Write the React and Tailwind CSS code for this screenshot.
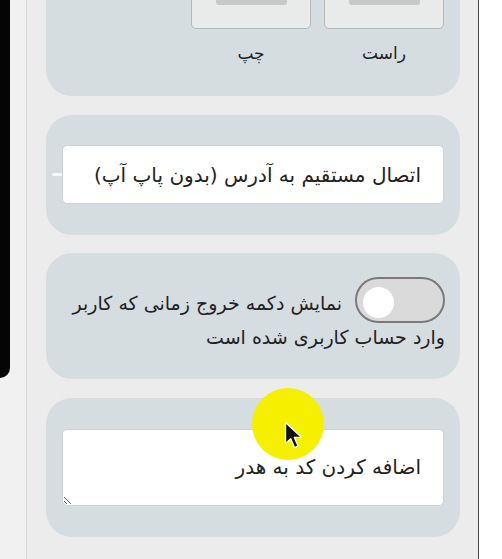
export default function App() {
  return (
    <div className="relative flex w-[502px] h-[559px] overflow-hidden bg-white font-['DejaVu_Sans',sans-serif] text-[#222]">
      {/* left strip */}
      <div className="w-[26px] h-full bg-[#f1f1f1] shrink-0">
        <div className="w-[10px] h-[378px] bg-[#050505] rounded-br-[10px]" />
      </div>
      <div className="w-px h-full bg-[#d6d6d6] shrink-0" />

      {/* main panel */}
      <div dir="rtl" className="w-[451px] h-full shrink-0 bg-[#ececec] pr-[18px] pl-[19px] flex flex-col">
        {/* card 1 */}
        <div className="mt-[-59px] bg-[#d6dde1] rounded-[26px] pt-[16px] pb-[33px] px-[16px] flex gap-[13px]">
          {["راست", "چپ"].map((label) => (
            <div key={label} className="w-[120px] flex flex-col items-center">
              <div className="w-full h-[72px] bg-[#e9eaea] border border-[#b8b8b8] rounded-[5px] flex justify-center">
                <div className="mt-[27px] w-[71px] h-[20px] bg-[#c8c8c8] rounded-[3px]" />
              </div>
              <div className="mt-[14px] text-[17px] leading-[20px]">{label}</div>
            </div>
          ))}
        </div>

        {/* card 2 */}
        <div className="mt-[19px] bg-[#d6dde1] rounded-[26px] pt-[30px] pb-[31px] px-[16px]">
          <div className="relative">
            <input
              dir="rtl"
              defaultValue="اتصال مستقیم به آدرس (بدون پاپ آپ)"
              className="block w-full h-[59px] bg-white border border-[#cfd2d4] rounded-[5px] pr-[22px] pl-[10px] text-[20px] text-[#222] outline-none font-['DejaVu_Sans',sans-serif]"
            />
            <span className="absolute left-[-10px] top-[28px] w-[10px] h-[3px] bg-white/80 rounded-full" />
          </div>
        </div>

        {/* card 3 */}
        <div className="mt-[18px] bg-[#d6dde1] rounded-[26px] pt-[33px] pb-[25px] pr-[15px] pl-[16px]">
          <p className="text-[19px] leading-[34px]">
            <span className="inline-block align-top mt-[-9px] mb-[-3px] ml-[13px] w-[90px] h-[46px] rounded-full border-2 border-[#7a7a7a] bg-[#dadada] relative">
              <span className="absolute left-[6px] top-[8px] w-[31px] h-[31px] rounded-full bg-white" />
            </span>
            نمایش دکمه خروج زمانی که کاربر وارد حساب کاربری شده است
          </p>
        </div>

        {/* card 4 */}
        <div className="mt-[19px] bg-[#d6dde1] rounded-[26px] pt-[31px] pb-[31px] px-[16px]">
          <textarea
            dir="rtl"
            defaultValue="اضافه کردن کد به هدر"
            className="block w-full h-[77px] bg-white border border-[#cfd2d4] rounded-[5px] pt-[25px] pr-[22px] pl-[10px] text-[20px] leading-[24px] text-[#222] outline-none font-['DejaVu_Sans',sans-serif]"
          />
        </div>
      </div>

      <div className="w-px h-full bg-[#4a4a4a] shrink-0" />
      <div className="flex-1 h-full bg-white" />

      {/* cursor highlight */}
      <div className="absolute left-[252px] top-[388px] w-[72px] h-[72px] rounded-full bg-[#f4f000] blur-[0.6px]" />
      <svg className="absolute left-[284px] top-[421px]" width="19" height="29" viewBox="0 0 13 20">
        <path d="M1 1 L1 15.5 L4.6 12.2 L7.2 18.3 L9.6 17.3 L7.1 11.3 L12 11.3 Z" fill="#111" stroke="#fff" strokeWidth="0.9" strokeLinejoin="round" />
      </svg>
    </div>
  );
}
